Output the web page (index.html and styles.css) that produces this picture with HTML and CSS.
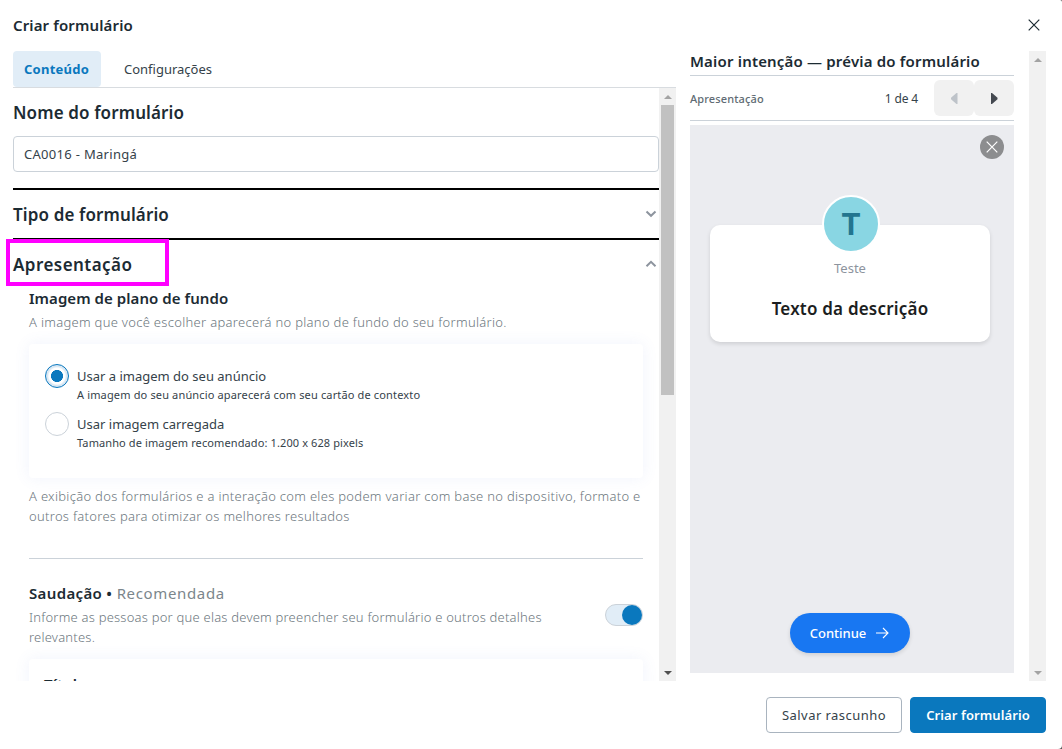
FILE: index.html
```html
<!DOCTYPE html>
<html lang="pt-BR">
<head>
  <meta charset="UTF-8">
  <title>Criar formulário</title>
  <link rel="stylesheet" href="styles.css">
</head>
<body>
  <div class="dialog">
    <header class="dialog-header">
      <h1>Criar formulário</h1>
      <svg class="close-icon" width="12" height="12" viewBox="0 0 12 12"><path d="M.7.7l10.6 10.6M11.3.7L.7 11.3"/></svg>
    </header>

    <div class="dialog-body">
      <div class="editor">
        <nav class="tabs">
          <a class="tab active">Conteúdo</a>
          <a class="tab">Configurações</a>
        </nav>
        <div class="editor-scroll">
          <div class="editor-content">
            <h2>Nome do formulário</h2>
            <div class="name-input">CA0016 - Maringá</div>

            <div class="section-row">
              <h2>Tipo de formulário</h2>
              <svg class="chevron" width="12" height="8" viewBox="0 0 12 8"><path d="M1.5 1.5L6 5.8l4.5-4.3"/></svg>
            </div>
            <div class="section-row">
              <h2 class="open">Apresentação</h2>
              <svg class="chevron" width="12" height="8" viewBox="0 0 12 8"><path d="M1.5 6.2L6 1.9l4.5 4.3"/></svg>
              <div class="highlight"></div>
            </div>

            <div class="section">
              <h3>Imagem de plano de fundo</h3>
              <p class="hint">A imagem que você escolher aparecerá no plano de fundo do seu formulário.</p>
              <div class="card options">
                <div class="option">
                  <span class="radio checked"></span>
                  <div>
                    <div class="option-label">Usar a imagem do seu anúncio</div>
                    <div class="option-text">A imagem do seu anúncio aparecerá com seu cartão de contexto</div>
                  </div>
                </div>
                <div class="option">
                  <span class="radio"></span>
                  <div>
                    <div class="option-label">Usar imagem carregada</div>
                    <div class="option-text short">Tamanho de imagem recomendado: 1.200 x 628 pixels</div>
                  </div>
                </div>
              </div>
              <p class="hint note">A exibição dos formulários e a interação com eles podem variar com base no dispositivo, formato e<br>outros fatores para otimizar os melhores resultados</p>
              <hr>
              <div class="greeting">
                <div>
                  <h3>Saudação • <span class="optional">Recomendada</span></h3>
                  <p class="hint">Informe as pessoas por que elas devem preencher seu formulário e outros detalhes<br>relevantes.</p>
                </div>
                <div class="toggle"><span class="knob"></span></div>
              </div>
              <div class="card greeting-card"><h3>Título</h3></div>
            </div>
          </div>
          <div class="scrollbar">
            <span class="arrow up"></span>
            <span class="thumb"></span>
            <span class="arrow down dark"></span>
          </div>
        </div>
      </div>

      <aside class="preview">
        <h3 class="preview-title">Maior intenção — prévia do formulário</h3>
        <div class="pager">
          <span class="pager-name">Apresentação</span>
          <span class="pager-count">1 de 4</span>
          <button class="pager-btn disabled"><svg width="7" height="11" viewBox="0 0 7 11"><path d="M6.5 0v11h-1L0 6.2V4.8L5.5 0z"/></svg></button>
          <button class="pager-btn"><svg width="7" height="11" viewBox="0 0 7 11"><path d="M0 0v11h1l5.5-4.8V4.8L1 0z"/></svg></button>
        </div>
        <div class="phone">
          <span class="phone-close"><svg width="12" height="12" viewBox="0 0 12 12"><path d="M.7.7l10.6 10.6M11.3.7L.7 11.3"/></svg></span>
          <div class="intro-card">
            <div class="avatar">T</div>
            <div class="page-name">Teste</div>
            <div class="intro-title">Texto da descrição</div>
          </div>
          <button class="continue">Continue<svg width="13" height="12" viewBox="0 0 13 12"><path d="M0 6h12M7 1l5 5-5 5"/></svg></button>
        </div>
      </aside>
      <div class="scrollbar">
        <span class="arrow up"></span>
        <span class="arrow down"></span>
      </div>
    </div>

    <footer class="dialog-footer">
      <button class="btn">Salvar rascunho</button>
      <button class="btn primary">Criar formulário</button>
    </footer>
  </div>
</body>
</html>
```

FILE: styles.css
```css
* {
  box-sizing: border-box;
}
body {
  margin: 0;
  font-family: 'Noto Sans', sans-serif;
  font-size: 13px;
  color: #35424a;
  background: #555;
}
h1, h2, h3, p {
  margin: 0;
  white-space: nowrap;
}
h1, h2, h3 {
  color: #1c2b33;
}
button {
  font-family: inherit;
  border: none;
  padding: 0;
}
svg {
  fill: none;
  display: block;
}
.dialog {
  width: 1062px;
  height: 749px;
  background: #fff;
  border-radius: 0 2px 4px 0;
  display: flex;
  flex-direction: column;
  overflow: hidden;
}
.dialog-header {
  height: 51px;
  padding: 0 22px 2px 13px;
  display: flex;
  align-items: center;
  justify-content: space-between;
}
h1 {
  font-size: 15px;
  font-weight: 600;
  letter-spacing: 0.13px;
}
.close-icon {
  stroke: #1c2b33;
  stroke-width: 1.2;
}
.dialog-body {
  height: 630px;
  display: flex;
}

/* left column */
.editor {
  width: 676px;
  display: flex;
  flex-direction: column;
}
.tabs {
  height: 37px;
  margin-left: 13px;
  border-bottom: 1px solid #d8dce0;
  display: flex;
}
.tab {
  height: 36px;
  line-height: 37px;
  padding: 0 11px;
  margin-right: 12px;
  border-radius: 4px;
}
.tab.active {
  width: 88px;
  background: #e1edf7;
  color: #0a78be;
  font-weight: 700;
  letter-spacing: 0.25px;
}
.editor-scroll {
  flex: 1;
  min-height: 0;
  display: flex;
}
.editor-content {
  width: 659px;
  padding-left: 13px;
  overflow: hidden;
}
h2 {
  height: 48px;
  font-size: 17px;
  font-weight: 600;
  line-height: 49px;
  letter-spacing: 0.12px;
}
h2.open {
  letter-spacing: 0.45px;
}
.name-input {
  height: 36px;
  border: 1px solid #cbd2d9;
  border-radius: 4px;
  padding-left: 10px;
  line-height: 35px;
  letter-spacing: 0.3px;
  margin-bottom: 16px;
}
.section-row {
  position: relative;
  height: 50px;
  border-top: 2px solid #000;
  padding-right: 2px;
  display: flex;
  align-items: center;
  justify-content: space-between;
}
.chevron {
  stroke: #8d949e;
  stroke-width: 2;
}
.highlight {
  position: absolute;
  left: -7px;
  top: -1px;
  width: 163px;
  height: 47px;
  border: 4px solid #ff00ff;
}
.section {
  padding: 0 16px;
}
h3 {
  font-size: 15px;
  font-weight: 600;
  line-height: 20px;
  letter-spacing: 0.06px;
}
.hint {
  line-height: 20px;
  color: #6c777e;
  font-weight: 300;
  letter-spacing: 0.3px;
}
.section > h3 + .hint {
  margin-top: 4px;
}
.card {
  background: #fff;
  border-radius: 4px;
  box-shadow: 0 0 16px rgba(90, 120, 220, 0.09);
}
.options {
  height: 134px;
  margin-top: 12px;
  padding: 20px 16px;
}
.option {
  height: 48px;
  display: flex;
  gap: 8px;
}
.radio {
  width: 24px;
  height: 24px;
  border: 1px solid #cbd2d9;
  border-radius: 50%;
}
.radio.checked {
  border: 1.5px solid #0a78be;
  background: radial-gradient(circle, #0a78be 5.7px, #fff 6.3px, #fff 8px, #d9e8f4 9.5px);
}
.option-label {
  line-height: 24px;
}
.option-text {
  font-size: 11px;
  line-height: 14px;
  letter-spacing: 0.15px;
}
.option-text.short {
  letter-spacing: 0.11px;
}
.note {
  margin-top: 8px;
}
hr {
  margin: 32px 0 22px;
  border: none;
  border-top: 1px solid #cbd2d9;
}
.greeting {
  display: flex;
  justify-content: space-between;
}
.greeting h3 {
  line-height: 24px;
  margin-bottom: 2px;
  letter-spacing: 0.35px;
}
.greeting .hint {
  letter-spacing: 0.22px;
}
.optional {
  color: #7b868c;
  font-weight: 400;
  letter-spacing: 0.65px;
}
.toggle {
  width: 38px;
  height: 22px;
  margin-top: 23px;
  border: 1px solid #cbd2d9;
  border-radius: 11px;
  background: #e1edf7;
  display: flex;
  justify-content: flex-end;
}
.knob {
  width: 20px;
  height: 20px;
  border-radius: 50%;
  background: #0a78be;
}
.greeting-card {
  height: 100px;
  margin-top: 12px;
  padding: 15px;
}

/* scrollbars */
.scrollbar {
  width: 17px;
  background: #f1f1f1;
  display: flex;
  flex-direction: column;
  align-items: center;
}
.thumb {
  width: 13px;
  height: 290px;
  background: #c1c1c1;
}
.arrow {
  height: 17px;
  display: flex;
  align-items: center;
}
.arrow::before {
  content: '';
  border: 4px solid transparent;
}
.arrow.up::before {
  border-top: 0;
  border-bottom-color: #a3a3a3;
}
.arrow.down {
  margin-top: auto;
}
.arrow.down::before {
  border-bottom: 0;
  border-top-color: #a3a3a3;
}
.arrow.dark::before {
  border-top-color: #505050;
}

/* right column */
.preview {
  width: 324px;
  margin: 0 15px 0 14px;
}
.preview-title {
  height: 25px;
  line-height: 21px;
  letter-spacing: 0.18px;
  border-bottom: 1px solid #cbd2d9;
}
.pager {
  height: 45px;
  border-bottom: 1px solid #cbd2d9;
  display: flex;
  align-items: center;
}
.pager-name {
  flex: 1;
  font-size: 11px;
  font-weight: 500;
  letter-spacing: 0.13px;
  color: #606b73;
}
.pager-count {
  font-size: 12px;
  letter-spacing: -0.15px;
  margin-right: 16px;
}
.pager-btn {
  width: 40px;
  height: 36px;
  border-radius: 6px;
  background: #f1f1f1;
  display: flex;
  align-items: center;
  justify-content: center;
}
.pager-btn svg {
  fill: #444950;
}
.pager-btn.disabled svg {
  fill: #bec3c9;
}
.phone {
  height: 548px;
  margin-top: 4px;
  padding: 10px 24px 20px 20px;
  background: #ebecf0;
  display: flex;
  flex-direction: column;
}
.phone-close {
  width: 24px;
  height: 24px;
  margin-right: -14px;
  align-self: flex-end;
  border-radius: 50%;
  background: #8c8d8f;
  display: flex;
  align-items: center;
  justify-content: center;
}
.phone-close svg {
  stroke: #fff;
  stroke-width: 1.2;
}
.intro-card {
  height: 117px;
  margin-top: 66px;
  background: #fff;
  border-radius: 10px;
  box-shadow: 0 2px 4px rgba(0, 0, 0, 0.12);
  display: flex;
  flex-direction: column;
  align-items: center;
}
.avatar {
  width: 58px;
  height: 58px;
  margin: -30px 0 0 2px;
  border: 2px solid #fff;
  border-radius: 50%;
  background: #89d6e3;
  color: #23758f;
  font-family: Inter, sans-serif;
  font-size: 30px;
  font-weight: 700;
  line-height: 54px;
  text-align: center;
}
.page-name {
  margin-top: 5px;
  line-height: 20px;
  color: #8d949e;
}
.intro-title {
  margin-top: 19px;
  font-size: 17px;
  font-weight: 600;
  line-height: 24px;
  letter-spacing: 0.2px;
  color: #1c1e21;
}
.continue {
  width: 120px;
  height: 40px;
  margin: auto auto 0;
  border-radius: 20px;
  background: #1877f2;
  box-shadow: 0 2px 4px rgba(0, 0, 0, 0.12);
  color: #fff;
  font-size: 13px;
  font-weight: 500;
  display: flex;
  align-items: center;
  justify-content: center;
  gap: 10px;
  padding-right: 1px;
}
.continue svg {
  stroke: #fff;
  stroke-width: 1.1;
}

/* footer */
.dialog-footer {
  height: 68px;
  padding: 16px 16px 0 0;
  display: flex;
  justify-content: flex-end;
  gap: 8px;
}
.btn {
  width: 136px;
  height: 36px;
  border: 1px solid #a9b4bf;
  border-radius: 4px;
  background: #fff;
  color: #35424a;
  font-size: 13px;
  letter-spacing: 0.45px;
}
.btn.primary {
  border-color: #0a78be;
  background: #0a78be;
  color: #fff;
  font-weight: 600;
  letter-spacing: 0.1px;
}
```
